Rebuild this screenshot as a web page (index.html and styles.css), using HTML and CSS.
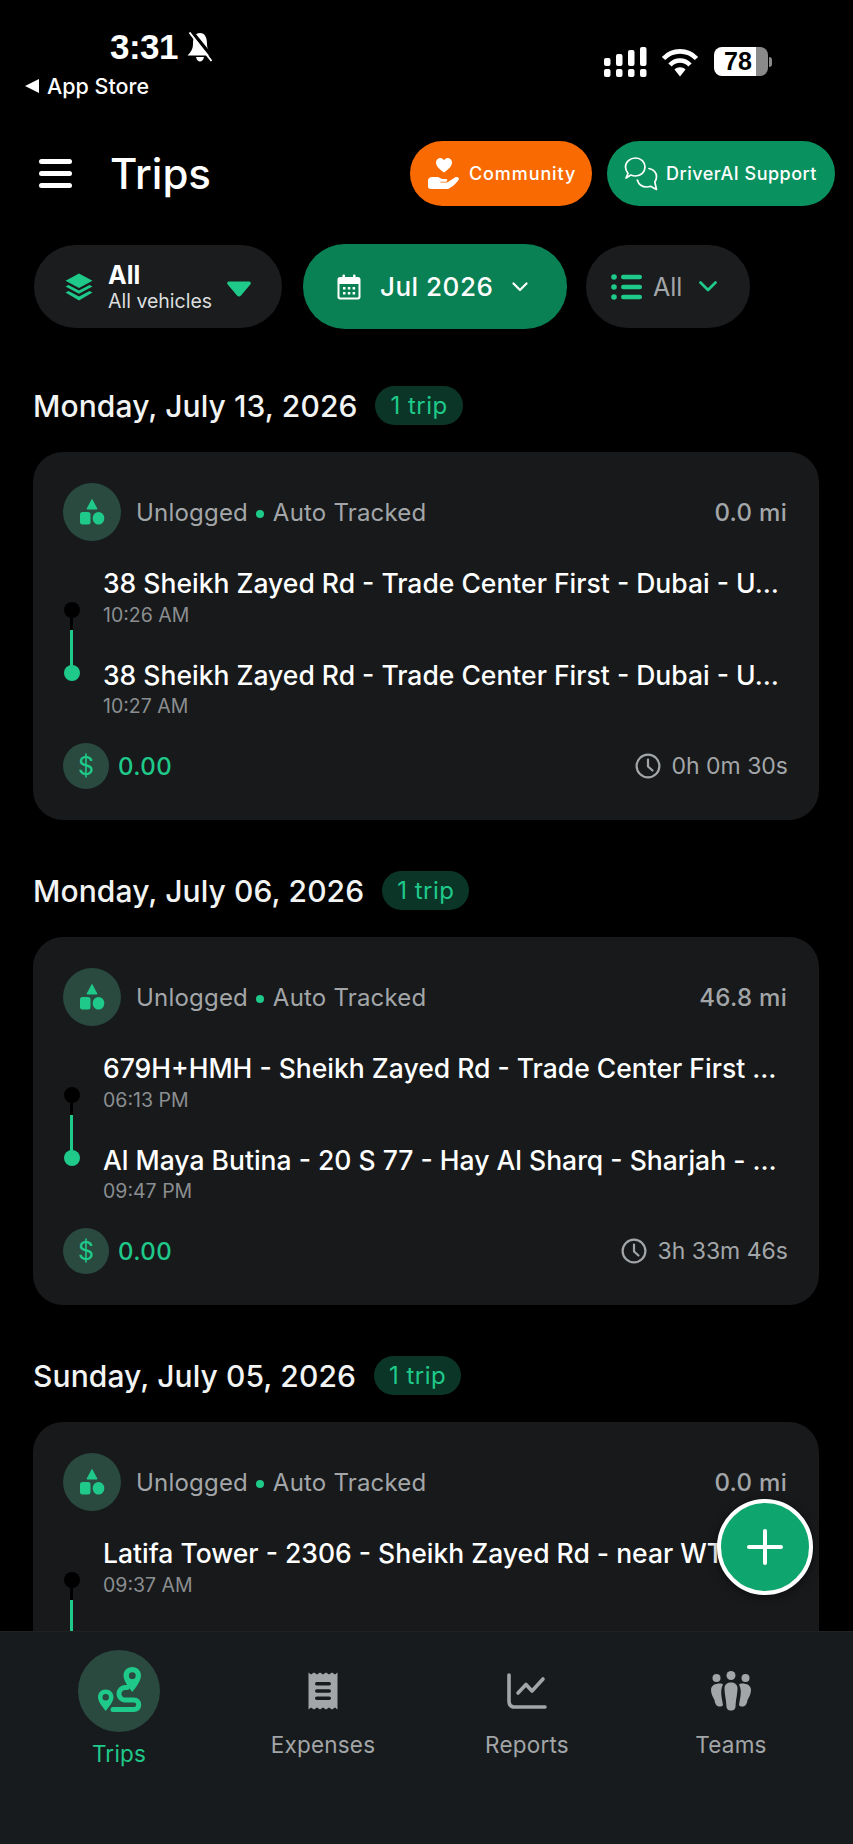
FILE: index.html
```html
<!DOCTYPE html>
<html lang="en">
<head>
    <meta charset="UTF-8">
    <meta name="viewport" content="width=device-width, initial-scale=1.0">
    <title>Trips</title>
    <link rel="stylesheet" href="styles.css">
</head>
<body>
    <svg class="sprite" aria-hidden="true">
        <symbol id="i-shapes" viewBox="0 0 26 26">
            <path d="M13 0.5 L18 10 H8 Z" fill="#1fc98a" stroke="#1fc98a" stroke-linejoin="round"/>
            <rect x="1" y="13" width="10.5" height="12.5" rx="2.5" fill="#1fc98a"/>
            <ellipse cx="19.5" cy="19.2" rx="5.8" ry="6.3" fill="#1fc98a"/>
        </symbol>
        <symbol id="i-clock" viewBox="0 0 26 26">
            <circle cx="13" cy="13" r="11.4" fill="none" stroke="#a3a6a8" stroke-width="2.2"/>
            <path d="M13 6.5 V13.5 L17.5 17.5" fill="none" stroke="#a3a6a8" stroke-width="2.2" stroke-linecap="round" stroke-linejoin="round"/>
        </symbol>
    </svg>

    <div class="phone">
        <div class="status">
            <div class="status-left">
                <div class="clock-row">
                    <span class="time">3:31</span>
                    <svg class="bell" viewBox="0 0 28 30">
                        <path d="M14 1 C19 1 21 6 21 11.500 C21 17 23 20 26.500 23.500 H1.500 C5 20 7 17 7 11.500 C7 6 9 1 14 1 Z" fill="#fff"/>
                        <path d="M10 25 H18 C17.500 28 15.500 29.500 14 29.500 C12.500 29.500 10.500 28 10 25 Z" fill="#fff"/>
                        <path d="M6 0 L28 27" stroke="#000" stroke-width="3.500"/>
                        <path d="M3.500 0.500 L25.500 29" stroke="#fff" stroke-width="2"/>
                    </svg>
                </div>
                <div class="back-app"><span class="back-tri"></span>App Store</div>
            </div>
            <div class="status-right">
                <svg class="signal" viewBox="0 0 43 30">
                    <g fill="#fff">
                        <rect x="0" y="11" width="6.500" height="8" rx="2"/>
                        <rect x="12" y="7" width="6.500" height="12" rx="2"/>
                        <rect x="24" y="3" width="6.500" height="16" rx="2"/>
                        <rect x="36" y="0" width="6.500" height="19" rx="2"/>
                        <rect x="0" y="22" width="6.500" height="8" rx="2"/>
                        <rect x="12" y="22" width="6.500" height="8" rx="2"/>
                        <rect x="24" y="22" width="6.500" height="8" rx="2"/>
                        <rect x="36" y="22" width="6.500" height="8" rx="2"/>
                    </g>
                </svg>
                <svg class="wifi" viewBox="0 0 38 30">
                    <g fill="none" stroke="#fff" stroke-width="4.600">
                        <path d="M2.500 11.500 C11.500 2 26.500 2 35.500 11.500"/>
                        <path d="M9 18 C14.500 12 23.500 12 29 18"/>
                    </g>
                    <path d="M13.500 22.500 C16.500 19.500 21.500 19.500 24.500 22.500 L19 29.500 Z" fill="#fff"/>
                </svg>
                <div class="battery">
                    <div class="battery-body"><span class="battery-num">78</span></div>
                    <span class="battery-cap"></span>
                </div>
            </div>
        </div>

        <div class="topbar">
            <div class="hamburger"><span></span><span></span><span></span></div>
            <h1 class="page-title">Trips</h1>
            <div class="top-actions">
                <div class="pill pill-orange">
                    <svg class="pill-icon" viewBox="0 0 34 34">
                        <path d="M17 15.500 C11 11 9 8.500 9 5.500 C9 2.500 11.300 1 13.300 1 C15 1 16.300 2 17 3.300 C17.700 2 19 1 20.700 1 C22.700 1 25 2.500 25 5.500 C25 8.500 23 11 17 15.500 Z" fill="#fff"/>
                        <path d="M1 23.500 C1 21.500 3 20 5 20 H10 C12 20 14 22 16 22 H19 C20.500 22 21 24.500 19 24.800 H13.500 L13.300 25.500 H20 L28 20.500 C30.500 19 33 21.500 31.500 23 C28 27.500 24 31.500 20 32 H4 C2 32 1 31 1 29.500 Z" fill="#fff"/>
                    </svg>
                    <span>Community</span>
                </div>
                <div class="pill pill-green">
                    <svg class="pill-icon pill-icon-chat" viewBox="0 0 34 34">
                        <g fill="none" stroke="#fff" stroke-width="1.700" stroke-linejoin="round" stroke-linecap="round">
                            <path d="M2 21 L4 16.500 C2.500 14.500 1.500 12.500 1.500 10 C1.500 5 6 1 11.500 1 C17 1 21 5 21 10 C21 15 17 19 11.500 19 C9.500 19 8 18.500 6.800 18 Z"/>
                            <path d="M25 11.500 C29.500 12.500 32.500 15.500 32.500 19.800 C32.500 22 31.800 23.500 30.800 25 L32.500 32.500 L26.500 29.300 C25.500 29.700 24.300 30 23 30 C18 30 14.500 27 13.300 23"/>
                        </g>
                    </svg>
                    <span>DriverAI Support</span>
                </div>
            </div>
        </div>

        <div class="filters">
            <div class="filter filter-vehicle">
                <svg class="layers" viewBox="0 0 28 28">
                    <path d="M14 0.500 L27.500 7.800 L14 15 L0.500 7.800 Z" fill="#1fc98a"/>
                    <path d="M0.500 13.500 L3.500 12 L14 17.600 L24.500 12 L27.500 13.500 L14 20.700 Z" fill="#1fc98a"/>
                    <path d="M0.500 19.500 L3.500 18 L14 23.600 L24.500 18 L27.500 19.500 L14 27.500 Z" fill="#1fc98a"/>
                </svg>
                <div class="vehicle-text">
                    <div class="vehicle-main">All</div>
                    <div class="vehicle-sub">All vehicles</div>
                </div>
                <svg class="tri-down" viewBox="0 0 26 18">
                    <path d="M3 1.500 H23 C24.500 1.500 25.500 3 24.500 4.200 L15 15.500 C14 16.800 12 16.800 11 15.500 L1.500 4.200 C0.500 3 1.500 1.500 3 1.500 Z" fill="#1fc98a"/>
                </svg>
            </div>
            <div class="filter filter-date">
                <svg class="calendar" viewBox="0 0 24 26">
                    <path d="M3 3 H21 C22.500 3 23.500 4 23.500 5.500 V23 C23.500 24.500 22.500 25.500 21 25.500 H3 C1.500 25.500 0.500 24.500 0.500 23 V5.500 C0.500 4 1.500 3 3 3 Z M2.500 10 V22.500 C2.500 23 3 23.500 3.500 23.500 H20.500 C21 23.500 21.500 23 21.500 22.500 V10 Z" fill="#fff" fill-rule="evenodd"/>
                    <rect x="5.500" y="0.500" width="2.500" height="5" rx="1" fill="#fff"/>
                    <rect x="16" y="0.500" width="2.500" height="5" rx="1" fill="#fff"/>
                    <g fill="#fff">
                        <rect x="6" y="13" width="2.500" height="2.500"/><rect x="10.800" y="13" width="2.500" height="2.500"/><rect x="15.600" y="13" width="2.500" height="2.500"/>
                        <rect x="6" y="18" width="2.500" height="2.500"/><rect x="10.800" y="18" width="2.500" height="2.500"/><rect x="15.600" y="18" width="2.500" height="2.500"/>
                    </g>
                </svg>
                <span class="date-label">Jul 2026</span>
                <svg class="chev" viewBox="0 0 16 10">
                    <path d="M1.500 1.500 L8 8 L14.500 1.500" fill="none" stroke="#fff" stroke-width="2.200" stroke-linecap="round" stroke-linejoin="round"/>
                </svg>
            </div>
            <div class="filter filter-status">
                <svg class="list-icon" viewBox="0 0 31 26">
                    <g fill="#1fc98a">
                        <circle cx="3" cy="3" r="2.800"/><circle cx="3" cy="13" r="2.800"/><circle cx="3" cy="23" r="2.800"/>
                        <rect x="10" y="0.800" width="21" height="4.400" rx="2.200"/>
                        <rect x="10" y="10.800" width="21" height="4.400" rx="2.200"/>
                        <rect x="10" y="20.800" width="21" height="4.400" rx="2.200"/>
                    </g>
                </svg>
                <span class="status-label">All</span>
                <svg class="chev chev-green" viewBox="0 0 18 11">
                    <path d="M1.500 1.500 L9 9 L16.500 1.500" fill="none" stroke="#1fc98a" stroke-width="2.800" stroke-linecap="round" stroke-linejoin="round"/>
                </svg>
            </div>
        </div>

        <div class="trips">
            <section class="day">
                <div class="day-head">
                    <h2 class="day-title">Monday, July 13, 2026</h2>
                    <span class="day-count">1 trip</span>
                </div>
                <div class="card">
                    <div class="card-top">
                        <div class="round-icon"><svg class="shapes"><use href="#i-shapes"/></svg></div>
                        <span class="trip-state">Unlogged <i class="dot"></i> Auto Tracked</span>
                        <span class="trip-dist">0.0 mi</span>
                    </div>
                    <div class="route">
                        <div class="rail"><i class="rail-start"></i><i class="rail-black"></i><i class="rail-green"></i><i class="rail-end"></i></div>
                        <div class="stops">
                            <div class="stop">
                                <div class="addr">38 Sheikh Zayed Rd - Trade Center First - Dubai - U…</div>
                                <div class="stop-time">10:26 AM</div>
                            </div>
                            <div class="stop">
                                <div class="addr">38 Sheikh Zayed Rd - Trade Center First - Dubai - U…</div>
                                <div class="stop-time">10:27 AM</div>
                            </div>
                        </div>
                    </div>
                    <div class="card-bottom">
                        <div class="round-icon round-small">$</div>
                        <span class="amount">0.00</span>
                        <svg class="clock"><use href="#i-clock"/></svg>
                        <span class="duration">0h 0m 30s</span>
                    </div>
                </div>
            </section>

            <section class="day">
                <div class="day-head">
                    <h2 class="day-title">Monday, July 06, 2026</h2>
                    <span class="day-count">1 trip</span>
                </div>
                <div class="card">
                    <div class="card-top">
                        <div class="round-icon"><svg class="shapes"><use href="#i-shapes"/></svg></div>
                        <span class="trip-state">Unlogged <i class="dot"></i> Auto Tracked</span>
                        <span class="trip-dist">46.8 mi</span>
                    </div>
                    <div class="route">
                        <div class="rail"><i class="rail-start"></i><i class="rail-black"></i><i class="rail-green"></i><i class="rail-end"></i></div>
                        <div class="stops">
                            <div class="stop">
                                <div class="addr">679H+HMH - Sheikh Zayed Rd - Trade Center First …</div>
                                <div class="stop-time">06:13 PM</div>
                            </div>
                            <div class="stop">
                                <div class="addr">Al Maya Butina - 20 S 77 - Hay Al Sharq - Sharjah - …</div>
                                <div class="stop-time">09:47 PM</div>
                            </div>
                        </div>
                    </div>
                    <div class="card-bottom">
                        <div class="round-icon round-small">$</div>
                        <span class="amount">0.00</span>
                        <svg class="clock"><use href="#i-clock"/></svg>
                        <span class="duration">3h 33m 46s</span>
                    </div>
                </div>
            </section>

            <section class="day">
                <div class="day-head">
                    <h2 class="day-title">Sunday, July 05, 2026</h2>
                    <span class="day-count">1 trip</span>
                </div>
                <div class="card">
                    <div class="card-top">
                        <div class="round-icon"><svg class="shapes"><use href="#i-shapes"/></svg></div>
                        <span class="trip-state">Unlogged <i class="dot"></i> Auto Tracked</span>
                        <span class="trip-dist">0.0 mi</span>
                    </div>
                    <div class="route">
                        <div class="rail"><i class="rail-start"></i><i class="rail-black"></i><i class="rail-green"></i><i class="rail-end"></i></div>
                        <div class="stops">
                            <div class="stop">
                                <div class="addr">Latifa Tower - 2306 - Sheikh Zayed Rd - near WT…</div>
                                <div class="stop-time">09:37 AM</div>
                            </div>
                        </div>
                    </div>
                </div>
            </section>

            <div class="fab"><span class="fab-h"></span><span class="fab-v"></span></div>
        </div>

        <nav class="tabbar">
            <div class="tab tab-active">
                <div class="tab-slot tab-bubble">
                    <svg class="tab-trips" viewBox="0 0 82 82">
                        <path d="M54.300 17 C59.500 17 63 21 63 25.500 C63 31 57.500 38 54.300 42 C51 38 45.500 31 45.500 25.500 C45.500 21 49 17 54.300 17 Z M54.300 22.300 A3.400 3.400 0 1 0 54.300 29.100 A3.400 3.400 0 1 0 54.300 22.300 Z" fill="#1fc98a" fill-rule="evenodd"/>
                        <path d="M27.700 39.500 C32.500 39.500 35.500 43 35.500 47 C35.500 52 30.500 57.500 27.700 61 C25 57.500 20 52 20 47 C20 43 23 39.500 27.700 39.500 Z M27.700 44 A3.200 3.200 0 1 0 27.700 50.400 A3.200 3.200 0 1 0 27.700 44 Z" fill="#1fc98a" fill-rule="evenodd"/>
                        <path d="M49 37.500 H46.500 A6.300 6.300 0 0 0 46.500 50 H56 A4.700 4.700 0 0 1 56 59.500 H35" fill="none" stroke="#1fc98a" stroke-width="5" stroke-linecap="round"/>
                    </svg>
                </div>
                <span class="tab-label">Trips</span>
            </div>
            <div class="tab">
                <div class="tab-slot">
                    <svg class="tab-expenses" viewBox="0 0 30 38">
                        <path d="M0.500 0.500 L3 2.500 L6 0.500 L9 2.500 L12 0.500 L15 2.500 L18 0.500 L21 2.500 L24 0.500 L27 2.500 L29.500 0.500 V37.500 L27 35.500 L24 37.500 L21 35.500 L18 37.500 L15 35.500 L12 37.500 L9 35.500 L6 37.500 L3 35.500 L0.500 37.500 Z" fill="#a3a6a8"/>
                        <g fill="#181b1d">
                            <rect x="7" y="10" width="16" height="3.600" rx="1.800"/>
                            <rect x="7" y="17.200" width="16" height="3.600" rx="1.800"/>
                            <rect x="7" y="24.400" width="16" height="3.600" rx="1.800"/>
                        </g>
                    </svg>
                </div>
                <span class="tab-label">Expenses</span>
            </div>
            <div class="tab">
                <div class="tab-slot">
                    <svg class="tab-reports" viewBox="0 0 40 36">
                        <path d="M2 2 V28 C2 32 4 34 8 34 H38" fill="none" stroke="#a3a6a8" stroke-width="3.600" stroke-linecap="round"/>
                        <path d="M11 20 L19 11.500 L25 18 L36 6" fill="none" stroke="#a3a6a8" stroke-width="3.600" stroke-linecap="round" stroke-linejoin="round"/>
                    </svg>
                </div>
                <span class="tab-label">Reports</span>
            </div>
            <div class="tab">
                <div class="tab-slot">
                    <svg class="tab-teams" viewBox="0 0 40 40">
                        <g fill="#a3a6a8">
                            <circle cx="20" cy="4.500" r="4.500"/>
                            <circle cx="5.500" cy="7" r="4"/>
                            <circle cx="34.500" cy="7" r="4"/>
                            <path d="M13.500 17 C13.500 13.500 16.500 11.500 20 11.500 C23.500 11.500 26.500 13.500 26.500 17 C26.500 23 25 27 24.500 36 C24 39 21.500 39.500 20 39.500 C18.500 39.500 16 39 15.500 36 C15 27 13.500 23 13.500 17 Z"/>
                            <path d="M9 12.500 C4 12.500 0 14.500 0 19 C0 23 2 26 3.500 29 C4 33 5.500 35.500 8.500 35.500 C10.500 35.500 11.500 35 12 34 C11 27 8.500 20 12 13.500 C11.500 13 10.500 12.500 9 12.500 Z"/>
                            <path d="M31 12.500 C36 12.500 40 14.500 40 19 C40 23 38 26 36.500 29 C36 33 34.500 35.500 31.500 35.500 C29.500 35.500 28.500 35 28 34 C29 27 31.500 20 28 13.500 C28.500 13 29.500 12.500 31 12.500 Z"/>
                        </g>
                    </svg>
                </div>
                <span class="tab-label">Teams</span>
            </div>
        </nav>
    </div>
</body>
</html>
```

FILE: styles.css
```css
* {
    box-sizing: border-box;
}
body {
    margin: 0;
    background: #000;
    font-family: Inter, "Liberation Sans", sans-serif;
    color: #fff;
}
.sprite {
    display: none;
}
.phone {
    display: flex;
    flex-direction: column;
    height: 1844px;
    overflow: hidden;
}

/* status bar */
.status {
    display: flex;
    justify-content: space-between;
    height: 141px;
    flex-shrink: 0;
}
.status-left {
    padding: 29px 0 0 25px;
}
.clock-row {
    display: flex;
    align-items: center;
    gap: 8px;
    margin-left: 85px;
    height: 36px;
}
.time {
    font-family: "Liberation Sans", Arial, sans-serif;
    font-size: 35px;
    font-weight: 700;
    letter-spacing: -0.5px;
}
.bell {
    width: 28px;
    height: 30px;
}
.back-app {
    display: flex;
    align-items: center;
    gap: 8px;
    margin-top: 8px;
    font-size: 21.5px;
    font-weight: 500;
}
.back-tri {
    width: 0;
    height: 0;
    border-top: 7px solid transparent;
    border-bottom: 7px solid transparent;
    border-right: 14px solid #fff;
}
.status-right {
    display: flex;
    align-items: flex-start;
    padding: 47px 81px 0 0;
}
.signal {
    width: 43px;
    height: 30px;
    margin-right: 14px;
}
.wifi {
    width: 38px;
    height: 30px;
    margin-right: 15px;
}
.battery {
    display: flex;
    align-items: center;
    height: 29px;
}
.battery-body {
    width: 54px;
    height: 29px;
    border-radius: 8px;
    background: linear-gradient(90deg, #fff 78%, #8a8a8a 78%);
    text-align: left;
    padding-left: 10px;
}
.battery-num {
    color: #000;
    font-family: "Liberation Sans", Arial, sans-serif;
    font-size: 25px;
    line-height: 29px;
    font-weight: 700;
}
.battery-cap {
    width: 3px;
    height: 10px;
    background: #8a8a8a;
    border-radius: 0 3px 3px 0;
    margin-left: 1px;
}

/* header */
.topbar {
    display: flex;
    align-items: center;
    height: 65px;
    padding: 0 18px 0 39px;
    flex-shrink: 0;
}
.hamburger {
    display: flex;
    flex-direction: column;
    gap: 7px;
    width: 33px;
}
.hamburger span {
    height: 5px;
    border-radius: 3px;
    background: #fff;
}
.page-title {
    margin: 0 0 0 38px;
    font-size: 42px;
    font-weight: 500;
}
.top-actions {
    display: flex;
    gap: 15px;
    margin-left: auto;
}
.pill {
    display: flex;
    align-items: center;
    height: 65px;
    border-radius: 33px;
    font-size: 18px;
    font-weight: 500;
    letter-spacing: 0.5px;
}
.pill-orange {
    width: 182px;
    padding-left: 17px;
    gap: 8px;
    background: #f96b02;
    letter-spacing: 0.9px;
}
.pill-green {
    width: 228px;
    padding-left: 17px;
    gap: 8px;
    background: #0a9160;
}
.pill-icon {
    width: 34px;
    height: 34px;
    flex-shrink: 0;
}

/* filter row */
.filters {
    display: flex;
    align-items: center;
    gap: 19px;
    margin-top: 38px;
    padding-left: 34px;
    height: 85px;
    flex-shrink: 0;
}
.filter {
    display: flex;
    align-items: center;
    border-radius: 42px;
    height: 83px;
    background: #1a1c1e;
}
.filter-vehicle {
    width: 248px;
    padding-left: 31px;
}
.layers {
    width: 28px;
    height: 28px;
    margin-right: 15px;
}
.vehicle-main {
    font-size: 25px;
    font-weight: 700;
    line-height: 28px;
}
.vehicle-sub {
    font-size: 19.5px;
    line-height: 24px;
    color: #dcdedf;
}
.tri-down {
    width: 26px;
    height: 18px;
    margin: 5px 0 0 14px;
}
.filter-date {
    width: 264px;
    height: 85px;
    margin-left: 2px;
    padding-left: 34px;
    background: #0a8055;
}
.calendar {
    width: 24px;
    height: 26px;
    margin-right: 19px;
}
.date-label {
    font-size: 26px;
    font-weight: 500;
    letter-spacing: 0.5px;
}
.chev {
    width: 16px;
    height: 10px;
    margin-left: 19px;
}
.filter-status {
    width: 164px;
    padding-left: 25px;
}
.list-icon {
    width: 31px;
    height: 26px;
    margin-right: 11px;
}
.status-label {
    font-size: 25px;
    color: #a3a6a8;
}
.chev-green {
    width: 18px;
    height: 11px;
    margin-left: 17px;
}

/* trip list */
.trips {
    position: relative;
    flex: 1;
    min-height: 0;
    padding: 57px 34px 0 33px;
}
.day {
    margin-bottom: 51px;
}
.day-head {
    display: flex;
    align-items: center;
    gap: 18px;
    height: 39px;
    margin-bottom: 27px;
}
.day-title {
    margin: 0;
    font-size: 30px;
    font-weight: 500;
    letter-spacing: 0.1px;
    color: #f2f3f3;
}
.day-count {
    padding: 0 15px;
    height: 39px;
    line-height: 39px;
    border-radius: 20px;
    background: #0a3527;
    color: #1fc98a;
    font-size: 24px;
    letter-spacing: 0.5px;
}
.card {
    padding: 31px 32px 31px 30px;
    min-height: 368px;
    border-radius: 30px;
    background: #17191b;
}
.card-top {
    display: flex;
    align-items: center;
}
.round-icon {
    display: flex;
    align-items: center;
    justify-content: center;
    width: 58px;
    height: 58px;
    border-radius: 50%;
    background: #2a4a40;
    flex-shrink: 0;
}
.shapes {
    width: 26px;
    height: 26px;
}
.trip-state {
    margin-left: 15px;
    font-size: 24px;
    letter-spacing: 0.2px;
    color: #a3a6a8;
}
.dot {
    display: inline-block;
    width: 8px;
    height: 8px;
    margin: 0 1.5px;
    border-radius: 50%;
    background: #1fc98a;
    vertical-align: 3px;
}
.trip-dist {
    margin-left: auto;
    font-size: 24px;
    font-weight: 500;
    letter-spacing: 0.3px;
    color: #a3a6a8;
}
.route {
    display: flex;
    gap: 23px;
    margin-top: 24px;
}
.rail {
    display: flex;
    flex-direction: column;
    align-items: center;
    width: 17px;
    padding-top: 37px;
    flex-shrink: 0;
}
.rail i {
    display: block;
}
.rail-start,
.rail-end {
    width: 16px;
    height: 16px;
    border-radius: 50%;
    background: #000;
}
.rail-end {
    margin-top: -2px;
    background: #1fc98a;
}
.rail-black {
    width: 3px;
    height: 12px;
    background: #000;
}
.rail-green {
    width: 3px;
    height: 37px;
    background: #1fc98a;
}
.stops {
    display: flex;
    flex-direction: column;
    gap: 29px;
    min-width: 0;
    flex: 1;
}
.addr {
    height: 36px;
    line-height: 36px;
    font-size: 26.5px;
    font-weight: 500;
    white-space: nowrap;
}
.stop-time {
    height: 26px;
    line-height: 26px;
    margin-top: 1px;
    font-size: 19.5px;
    color: #8b8e90;
}
.stop + .stop .stop-time {
    margin-top: 0;
}
.card-bottom {
    display: flex;
    align-items: center;
    margin: 24px -1px 0 0;
}
.round-small {
    width: 46px;
    height: 46px;
    font-size: 25px;
    color: #1fc98a;
}
.amount {
    margin-left: 9px;
    font-size: 24px;
    font-weight: 500;
    letter-spacing: 0.4px;
    color: #1fc98a;
}
.clock {
    width: 26px;
    height: 26px;
    margin-left: auto;
}
.duration {
    margin-left: 10px;
    font-size: 23px;
    color: #a3a6a8;
}
.fab {
    position: absolute;
    right: 40px;
    bottom: 36px;
    width: 96px;
    height: 96px;
    border: 4px solid #fff;
    border-radius: 50%;
    background: #0fa56e;
    box-shadow: 0 2px 10px rgba(0, 0, 0, 0.5);
}
.fab-h,
.fab-v {
    position: absolute;
    background: #fff;
    border-radius: 2px;
}
.fab-h {
    left: 26px;
    top: 42px;
    width: 36px;
    height: 4px;
}
.fab-v {
    left: 42px;
    top: 26px;
    width: 4px;
    height: 36px;
}

/* bottom tabs */
.tabbar {
    position: relative;
    display: grid;
    grid-template-columns: repeat(4, 204px);
    height: 213px;
    padding: 18px 0 0 17px;
    background: #181b1d;
    border-top: 1px solid #1f2224;
    flex-shrink: 0;
}
.tab {
    display: flex;
    flex-direction: column;
    align-items: center;
}
.tab-slot {
    display: flex;
    align-items: center;
    justify-content: center;
    width: 82px;
    height: 82px;
}
.tab-bubble {
    border-radius: 50%;
    background: #2a4a40;
}
.tab-trips {
    width: 82px;
    height: 82px;
}
.tab-expenses {
    width: 30px;
    height: 38px;
}
.tab-reports {
    width: 40px;
    height: 36px;
}
.tab-teams {
    width: 40px;
    height: 40px;
}
.tab-label {
    height: 28px;
    margin-top: -1px;
    line-height: 28px;
    font-size: 22.5px;
    letter-spacing: 0.2px;
    color: #a3a6a8;
}
.tab-active .tab-label {
    margin-top: 8px;
    color: #1fc98a;
}
```
